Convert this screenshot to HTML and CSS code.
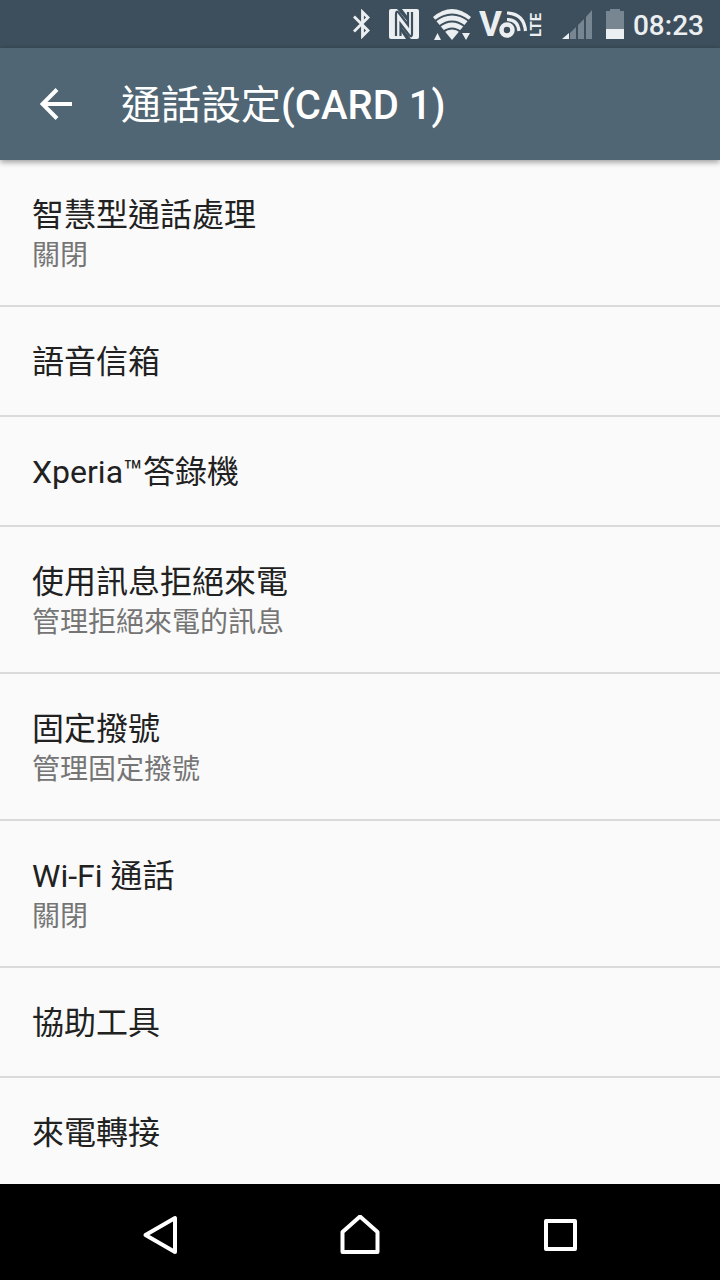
FILE: index.html
```html
<!DOCTYPE html>
<html lang="zh-Hant">
<head>
<meta charset="utf-8">
<meta name="viewport" content="width=device-width, initial-scale=1">
<title>通話設定</title>
<link rel="stylesheet" href="styles.css">
</head>
<body>
<div class="screen">
  <div class="status-bar">
    <svg class="icon-bluetooth" width="20" height="30" viewBox="0 0 20 30" aria-label="Bluetooth" role="img">
      <path d="M2 7.500 16 21.500 10.500 27V3L16 8.500 2 22.500" fill="none" stroke="currentColor" stroke-width="2.800"/>
    </svg>
    <svg class="icon-nfc" width="32" height="32" viewBox="0 0 32 32" aria-label="NFC" role="img">
      <rect x="1" y="1" width="30" height="30" rx="2" fill="currentColor"/>
      <path d="M8 28V6Q8 2 11 5L20 17V4M24 4V26Q24 30 21 27L12.500 16V28" fill="none" stroke="#3d4f5c" stroke-width="2.200"/>
      <path d="M9 1H14L20 9V14ZM23 31H18L12.500 23V18Z" fill="#3d4f5c"/>
    </svg>
    <svg class="icon-wifi" width="40" height="34" viewBox="0 0 40 34" aria-label="Wi-Fi" role="img">
      <path d="M1 10Q20-6 39 10L20 33Z" fill="currentColor"/>
      <path d="M3 14Q20 1 37 14M7 19.500Q20 9.500 33 19.500M11 25Q20 18 29 25" fill="none" stroke="#3d4f5c" stroke-width="2"/>
      <path d="M0 34V22H10L15 34ZM40 34V22H30L25 34Z" fill="#3d4f5c"/>
      <path d="M2 33 5.500 26 9 33ZM30 26H38L34 33Z" fill="currentColor"/>
    </svg>
    <svg class="icon-volte" width="68" height="40" viewBox="0 0 68 40" aria-label="VoLTE" role="img">
      <text class="volte-v" x="0" y="32">V</text>
      <circle cx="28" cy="26" r="5.500" fill="none" stroke="currentColor" stroke-width="4.500"/>
      <path d="M28 15.500Q39 15.500 40 27M28 9Q45 9.500 46.500 27" fill="none" stroke="currentColor" stroke-width="3.200"/>
      <text class="volte-lte" transform="translate(62 33) rotate(-90)">LTE</text>
    </svg>
    <svg class="icon-signal" width="32" height="32" viewBox="0 0 32 32" aria-label="訊號" role="img">
      <path d="M8 25V31H14V19ZM16 17V31H22V11ZM24 9V31H30V2Z" fill="#778690"/>
      <path d="M0 31 7 25V31Z" fill="currentColor"/>
    </svg>
    <svg class="icon-battery" width="20" height="30" viewBox="0 0 20 30" aria-label="電量" role="img">
      <path d="M1 2H5V0H15V2H19V20H1Z" fill="#778690"/>
      <path d="M1 20H19V30H1Z" fill="currentColor"/>
    </svg>
    <time class="clock">08:23</time>
  </div>
  <header class="app-bar">
    <button class="back" type="button" aria-label="返回">
      <svg width="32" height="32" viewBox="0 0 32 32">
        <path d="M32 16H3M17 1.500 2.500 16 17 30.500" fill="none" stroke="currentColor" stroke-width="4"/>
      </svg>
    </button>
    <h1 class="title">通話設定<span class="title-card">(CARD 1)</span></h1>
  </header>
  <main class="list">
    <button class="row" type="button"><span class="name">智慧型通話處理</span><span class="summary">關閉</span></button>
    <button class="row" type="button"><span class="name">語音信箱</span></button>
    <button class="row" type="button"><span class="name">Xperia™答錄機</span></button>
    <button class="row" type="button"><span class="name">使用訊息拒絕來電</span><span class="summary">管理拒絕來電的訊息</span></button>
    <button class="row" type="button"><span class="name">固定撥號</span><span class="summary">管理固定撥號</span></button>
    <button class="row" type="button"><span class="name">Wi-Fi 通話</span><span class="summary">關閉</span></button>
    <button class="row" type="button"><span class="name">協助工具</span></button>
    <button class="row" type="button"><span class="name">來電轉接</span></button>
  </main>
  <nav class="nav-bar">
    <button class="nav-button" type="button" aria-label="返回">
      <svg width="40" height="40" viewBox="0 0 40 40"><path d="M35 3V37L5.500 20Z"/></svg>
    </button>
    <button class="nav-button" type="button" aria-label="主畫面">
      <svg width="40" height="40" viewBox="0 0 40 40"><path d="M2.500 37V17L20 1.500 37.500 17V37Z"/></svg>
    </button>
    <button class="nav-button" type="button" aria-label="最近使用">
      <svg width="40" height="40" viewBox="0 0 40 40"><path d="M6 6H35V34H6Z"/></svg>
    </button>
  </nav>
</div>
</body>
</html>
```
FILE: styles.css
```css
* {
  box-sizing: border-box;
}

body {
  margin: 0;
  background: #fafafa;
  color: #212121;
  font-family: Roboto, "Noto Sans CJK TC", sans-serif;
}

button {
  margin: 0;
  padding: 0;
  border: 0;
  background: none;
  color: inherit;
  font: inherit;
}

svg {
  display: block;
  flex: none;
}

.screen {
  display: flex;
  flex-direction: column;
  height: 100vh;
}

.status-bar {
  display: flex;
  flex: none;
  align-items: center;
  justify-content: flex-end;
  height: 48px;
  padding-right: 16px;
  background: #3d4f5c;
  color: #eceff1;
}

.icon-nfc {
  margin-left: 16px;
}

.icon-wifi {
  margin-left: 12px;
}

.icon-volte {
  margin-left: 7px;
}

.icon-signal {
  margin-left: 15px;
}

.icon-battery {
  margin-left: 11px;
}

.volte-v {
  fill: currentColor;
  font-size: 35px;
  font-weight: 700;
}

.volte-lte {
  fill: currentColor;
  font-size: 15px;
  font-weight: 700;
}

.clock {
  margin-left: 8px;
  padding-top: 3px;
  font-size: 28px;
  font-weight: 500;
  line-height: 45px;
}

.app-bar {
  z-index: 1;
  display: flex;
  flex: none;
  align-items: center;
  gap: 49px;
  height: 112px;
  padding: 0 40px;
  background: #506674;
  box-shadow: 0 2px 6px rgba(0, 0, 0, 0.4);
  color: #fff;
}

.title {
  margin: 0;
  padding-top: 4px;
  font-size: 40px;
  font-weight: 400;
  line-height: 56px;
}

.title-card {
  font-weight: 500;
}

.list {
  flex: 1;
  min-height: 0;
  overflow: hidden;
}

.row {
  display: flex;
  flex-direction: column;
  width: 100%;
  min-height: 110px;
  padding: 35px 32px 28px;
  border-bottom: 2px solid #dadada;
  text-align: left;
}

.name {
  font-size: 32px;
  line-height: 40px;
}

.summary {
  color: #757575;
  font-size: 28px;
  line-height: 42px;
}

.nav-bar {
  display: flex;
  flex: none;
  align-items: center;
  justify-content: center;
  gap: 160px;
  height: 96px;
  padding-top: 6px;
  background: #000;
  color: #fff;
}

.nav-button path {
  fill: none;
  stroke: currentColor;
  stroke-width: 4px;
  stroke-linejoin: round;
}
```
